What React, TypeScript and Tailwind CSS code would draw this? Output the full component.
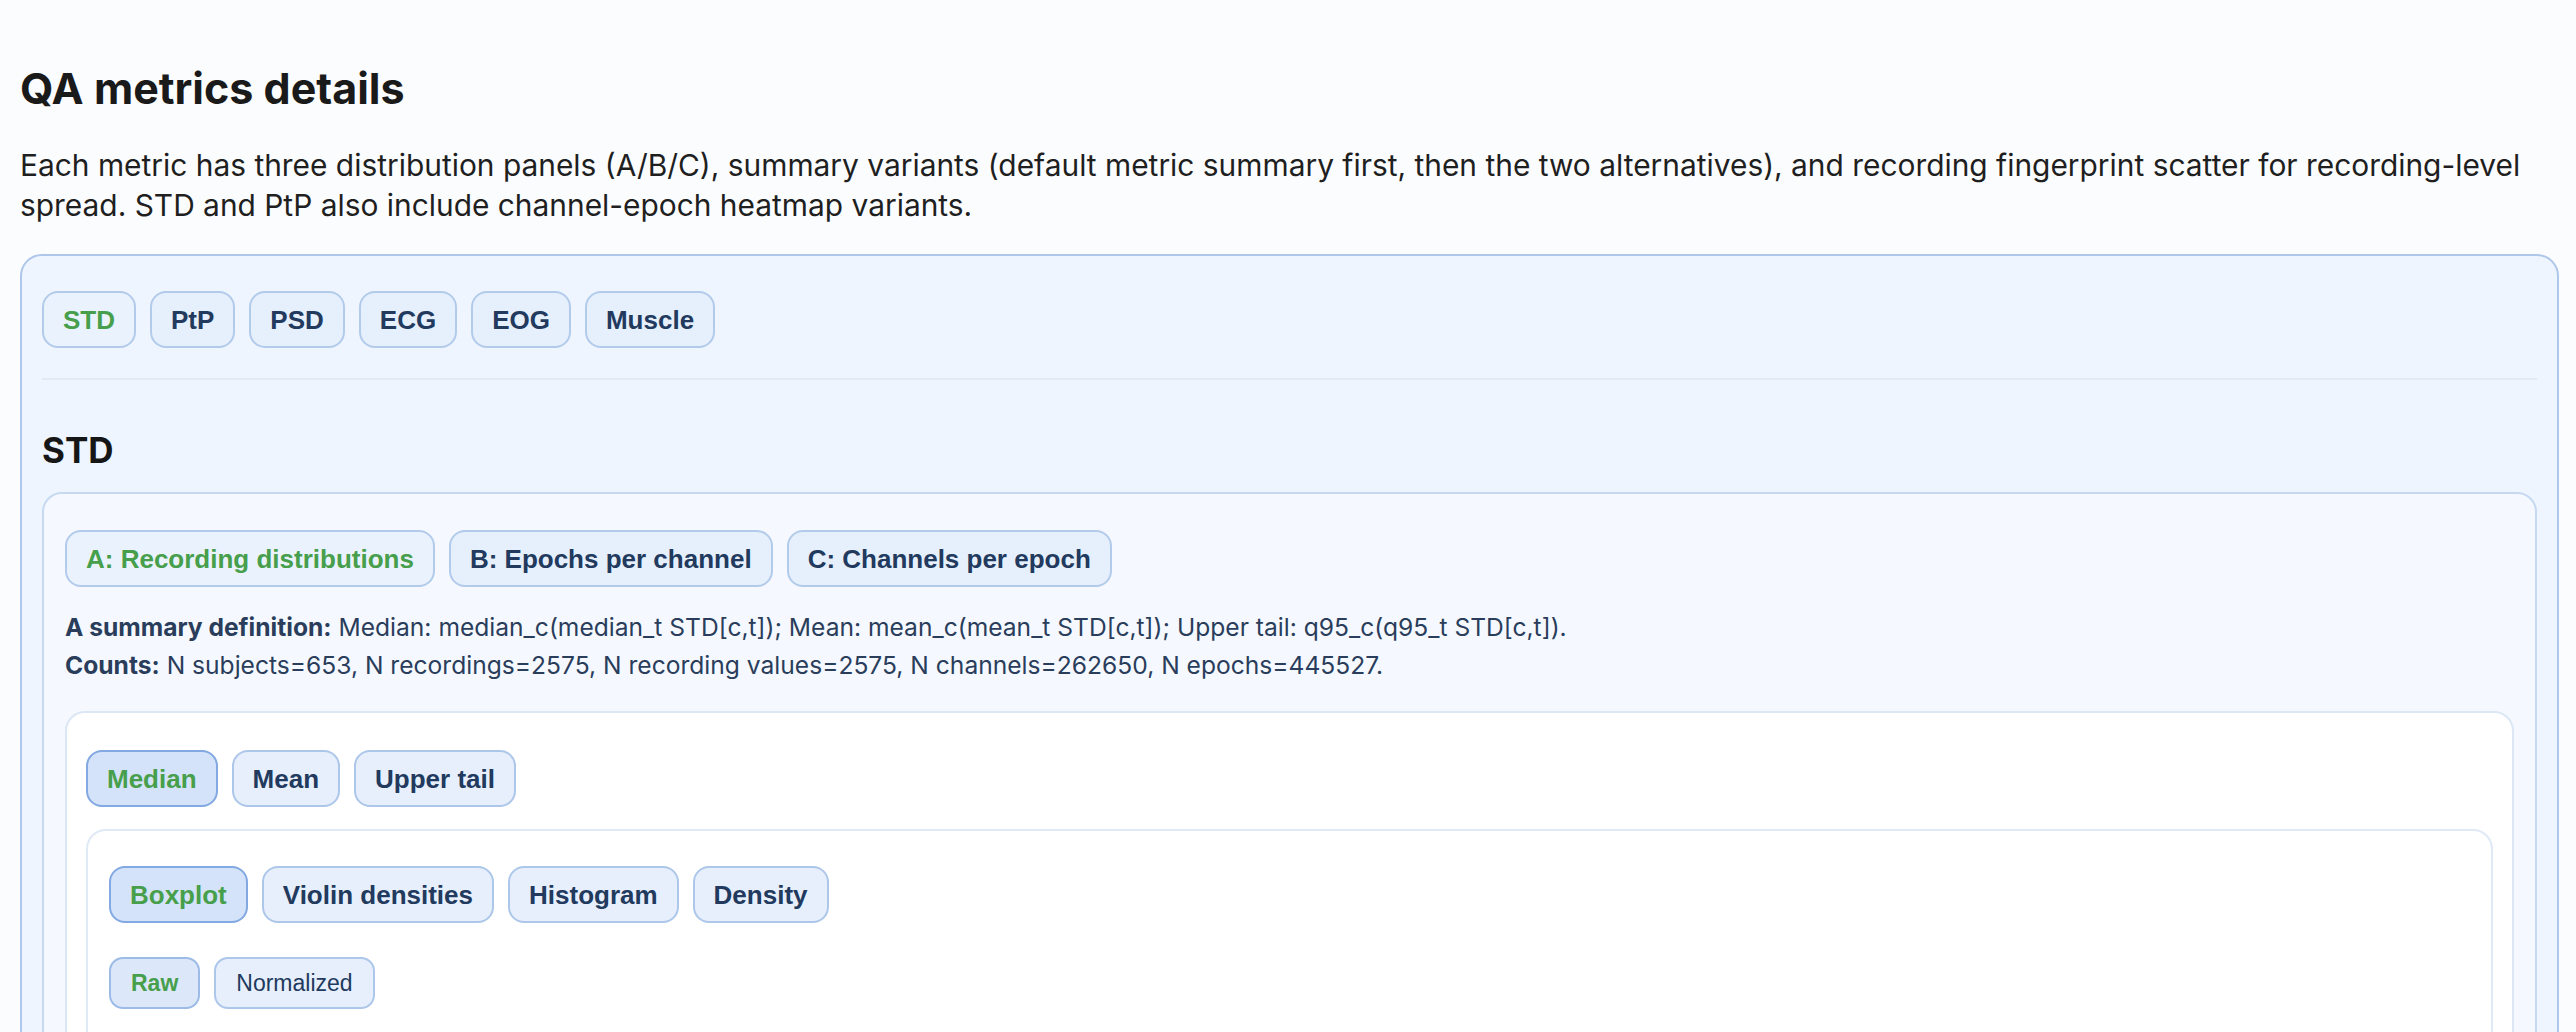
import { useState } from 'react';

function Chip({
  label,
  active,
  onClick,
  size = 'lg',
  strong = true,
}: {
  label: string;
  active: boolean;
  onClick: () => void;
  size?: 'lg' | 'sm';
  strong?: boolean;
}) {
  const base =
    size === 'lg'
      ? 'h-[57px] px-[19px] text-[26px] rounded-[16px]'
      : 'h-[52px] px-[20px] text-[23px] rounded-[14px]';
  let tone = 'bg-[#e7effc] border-[#adc7ea] text-[#213a5e]';
  if (active) {
    tone =
      size === 'lg'
        ? 'bg-[#d4e3fa] border-[#82a9e1] text-[#479f4c]'
        : 'bg-[#dce8fa] border-[#9cbbe6] text-[#479f4c]';
  }
  return (
    <button
      onClick={onClick}
      className={`${base} ${tone} ${strong || active ? 'font-bold' : 'font-normal'} flex items-center border-2 leading-none whitespace-nowrap font-['Liberation_Sans',Arial,sans-serif]`}
    >
      {label}
    </button>
  );
}

function ChipRow({
  items,
  value,
  onChange,
  size,
  strong,
}: {
  items: string[];
  value: string;
  onChange: (v: string) => void;
  size?: 'lg' | 'sm';
  strong?: boolean;
}) {
  return (
    <div className="flex flex-wrap gap-[14px]">
      {items.map((it) => (
        <Chip key={it} label={it} active={value === it} onClick={() => onChange(it)} size={size} strong={strong} />
      ))}
    </div>
  );
}

function SoftTab({ label, active, onClick }: { label: string; active: boolean; onClick: () => void }) {
  return (
    <button
      onClick={onClick}
      className={`flex h-[57px] items-center whitespace-nowrap rounded-[16px] border-2 px-[19px] font-['Liberation_Sans',Arial,sans-serif] text-[26px] font-bold leading-none ${
        active ? 'border-[#b3cbeb] bg-[#eaf2fe] text-[#479f4c]' : 'border-[#b3cbeb] bg-[#e6effc] text-[#213a5e]'
      }`}
    >
      {label}
    </button>
  );
}

const metrics = ['STD', 'PtP', 'PSD', 'ECG', 'EOG', 'Muscle'];
const panels = ['A: Recording distributions', 'B: Epochs per channel', 'C: Channels per epoch'];
const summaries = ['Median', 'Mean', 'Upper tail'];
const plots = ['Boxplot', 'Violin densities', 'Histogram', 'Density'];
const scales = ['Raw', 'Normalized'];

export default function App() {
  const [metric, setMetric] = useState('STD');
  const [panel, setPanel] = useState(panels[0]);
  const [summary, setSummary] = useState('Median');
  const [plot, setPlot] = useState('Boxplot');
  const [scale, setScale] = useState('Raw');

  return (
    <div className="min-h-screen bg-[#fbfcfe] pl-[20px] pr-[17px] pt-[65px] font-['Inter','Liberation_Sans',sans-serif] text-[#1c1c1c]">
      <h2 className="text-[43px] font-bold leading-[46px] text-[#1a1a1a]">QA metrics details</h2>
      <p className="mt-[35px] text-[29.9px] leading-[39.6px] text-[#1f1f1f]">
        Each metric has three distribution panels (A/B/C), summary variants (default metric summary first, then the
        two alternatives), and recording fingerprint scatter for recording-level spread. STD and PtP also include
        channel-epoch heatmap variants.
      </p>

      <section className="mt-[29px] rounded-[22px] border-2 border-[#aec7ea] bg-[#eef5fe] px-[20px] pt-[35px] pb-[40px]">
        <div className="flex flex-wrap gap-[14px]">
          {metrics.map((m) => (
            <SoftTab key={m} label={m} active={metric === m} onClick={() => setMetric(m)} />
          ))}
        </div>

        <div className="mt-[30px] border-t-2 border-[#e1e9f4]" />

        <h3 className="mt-[52px] text-[35px] font-bold leading-[36px] text-[#161616]">{metric}</h3>

        <div className="mt-[24px] rounded-[20px] border-2 border-[#c6d9f1] bg-[#f5f9ff] px-[21px] pt-[36px] pb-[40px]">
          <div className="flex flex-wrap gap-[14px]">
            {panels.map((p) => (
              <SoftTab key={p} label={p} active={panel === p} onClick={() => setPanel(p)} />
            ))}
          </div>

          <div className="mt-[21px] text-[24.6px] leading-[38px] text-[#2a3d5b]">
            <div>
              <span className="font-bold">A summary definition:</span> Median: median_c(median_t {metric}[c,t]); Mean:
              mean_c(mean_t {metric}[c,t]); Upper tail: q95_c(q95_t {metric}[c,t]).
            </div>
            <div>
              <span className="font-bold">Counts:</span> N subjects=653, N recordings=2575, N recording values=2575, N
              channels=262650, N epochs=445527.
            </div>
          </div>

          <div className="mt-[27px] rounded-[20px] border-2 border-[#dce7f6] bg-white px-[19px] pt-[37px] pb-[40px]">
            <ChipRow items={summaries} value={summary} onChange={setSummary} />

            <div className="mt-[22px] rounded-[20px] border-2 border-[#e0e9f6] bg-white px-[21px] pt-[35px] pb-[300px]">
              <ChipRow items={plots} value={plot} onChange={setPlot} />
              <div className="mt-[34px]">
                <ChipRow items={scales} value={scale} onChange={setScale} size="sm" strong={false} />
              </div>
            </div>
          </div>
        </div>
      </section>
    </div>
  );
}
